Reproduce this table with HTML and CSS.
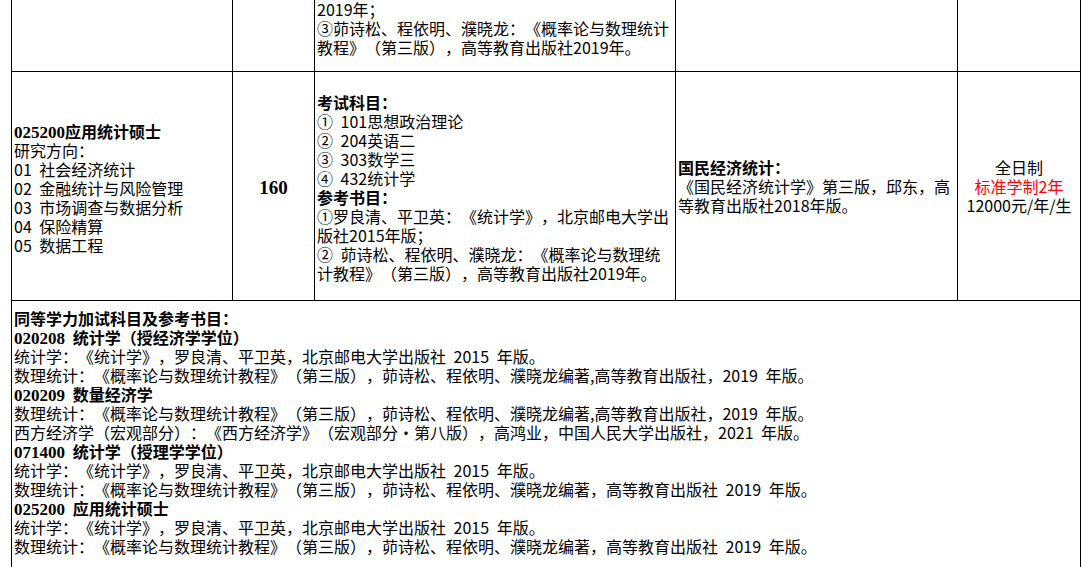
FILE: index.html
```html
<!DOCTYPE html>
<html lang="zh-CN">
<head>
<meta charset="utf-8">
<title>应用统计硕士</title>
<link rel="stylesheet" href="styles.css">
</head>
<body>
<table class="grid">
  <colgroup>
    <col class="c1"><col class="c2"><col class="c3"><col class="c4"><col class="c5">
  </colgroup>
  <tr class="row-top">
    <td></td>
    <td></td>
    <td class="top-text">
      <div class="ln">2019年；</div>
      <div class="ln">③茆诗松、程依明、濮晓龙：《概率论与数理统计</div>
      <div class="ln">教程》（第三版），高等教育出版社2019年。</div>
    </td>
    <td></td>
    <td></td>
  </tr>
  <tr class="row-main">
    <td class="major">
      <div class="ln b"><span class="num">025200</span>应用统计硕士</div>
      <div class="ln">研究方向：</div>
      <div class="ln">01 社会经济统计</div>
      <div class="ln">02 金融统计与风险管理</div>
      <div class="ln">03 市场调查与数据分析</div>
      <div class="ln">04 保险精算</div>
      <div class="ln">05 数据工程</div>
    </td>
    <td class="count">160</td>
    <td class="exam">
      <div class="ln b">考试科目：</div>
      <div class="ln">① 101思想政治理论</div>
      <div class="ln">② 204英语二</div>
      <div class="ln">③ 303数学三</div>
      <div class="ln">④ 432统计学</div>
      <div class="ln b">参考书目：</div>
      <div class="ln">①罗良清、平卫英：《统计学》，北京邮电大学出</div>
      <div class="ln">版社2015年版；</div>
      <div class="ln">② 茆诗松、程依明、濮晓龙：《概率论与数理统</div>
      <div class="ln">计教程》（第三版），高等教育出版社2019年。</div>
    </td>
    <td class="retest">
      <div class="ln b">国民经济统计：</div>
      <div class="ln">《国民经济统计学》第三版，邱东，高</div>
      <div class="ln">等教育出版社2018年版。</div>
    </td>
    <td class="mode">
      <div class="ln">全日制</div>
      <div class="ln red">标准学制2年</div>
      <div class="ln">12000元/年/生</div>
    </td>
  </tr>
  <tr class="row-extra">
    <td colspan="5" class="extra">
      <div class="ln b">同等学力加试科目及参考书目：</div>
      <div class="ln b"><span class="num">020208</span> 统计学（授经济学学位）</div>
      <div class="ln">统计学：《统计学》，罗良清、平卫英，北京邮电大学出版社 2015 年版。</div>
      <div class="ln">数理统计：《概率论与数理统计教程》（第三版），茆诗松、程依明、濮晓龙编著,高等教育出版社，2019 年版。</div>
      <div class="ln b"><span class="num">020209</span> 数量经济学</div>
      <div class="ln">数理统计：《概率论与数理统计教程》（第三版），茆诗松、程依明、濮晓龙编著,高等教育出版社，2019 年版。</div>
      <div class="ln">西方经济学（宏观部分）：《西方经济学》（宏观部分·第八版），高鸿业，中国人民大学出版社，2021 年版。</div>
      <div class="ln b"><span class="num">071400</span> 统计学（授理学学位）</div>
      <div class="ln">统计学：《统计学》，罗良清、平卫英，北京邮电大学出版社 2015 年版。</div>
      <div class="ln">数理统计：《概率论与数理统计教程》（第三版），茆诗松、程依明、濮晓龙编著，高等教育出版社 2019 年版。</div>
      <div class="ln b"><span class="num">025200</span> 应用统计硕士</div>
      <div class="ln">统计学：《统计学》，罗良清、平卫英，北京邮电大学出版社 2015 年版。</div>
      <div class="ln">数理统计：《概率论与数理统计教程》（第三版），茆诗松、程依明、濮晓龙编著，高等教育出版社 2019 年版。</div>
    </td>
  </tr>
</table>
</body>
</html>
```

FILE: styles.css
```css
html, body {
  margin: 0;
  padding: 0;
  background: #fff;
  overflow: hidden;
}

body {
  font-family: "Noto Sans CJK SC", "Noto Sans", sans-serif;
  font-size: 16px;
  line-height: 19px;
  color: #000;
  text-spacing-trim: space-all;
  word-spacing: 4px;
}

.grid {
  border-collapse: collapse;
  table-layout: fixed;
  width: 1070px;
  margin: -20px 0 0 11px;
}

.c1 { width: 221px; }
.c2 { width: 82px; }
.c3 { width: 361px; }
.c4 { width: 282px; }
.c5 { width: 123px; }

.grid td {
  border: 1px solid #000;
  padding: 0 0 0 2px;
  vertical-align: middle;
  white-space: nowrap;
  overflow: hidden;
}

.row-top td {
  height: 71px;
  vertical-align: top;
}

.grid td.top-text {
  padding-top: 19px;
}

.row-main td {
  height: 224px;
  padding-top: 4px;
}

.ln {
  height: 19px;
}

.b {
  font-weight: bold;
}

.num {
  font-family: "Liberation Serif", serif;
  font-weight: bold;
  font-size: 17px;
}

.grid td.count {
  text-align: center;
  font-family: "Liberation Serif", serif;
  font-weight: bold;
  font-size: 19px;
  padding-left: 0;
  padding-top: 2px;
}

.grid td.retest {
  padding-left: 2px;
  padding-top: 0;
}

.grid td.mode {
  text-align: center;
  padding-left: 0;
  padding-top: 0;
}

.red {
  color: #ff0000;
}

.grid td.extra {
  vertical-align: top;
  padding: 8px 0 0 2px;
  height: 300px;
}
```
